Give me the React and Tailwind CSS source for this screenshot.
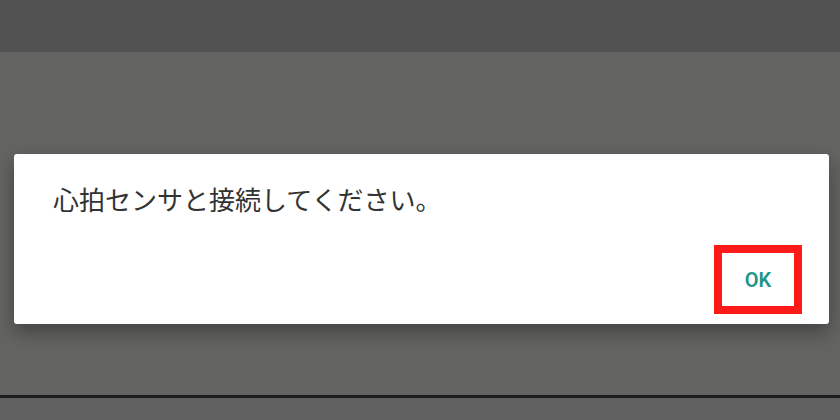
export default function App() {
  return (
    <div
      className="w-[840px] h-[420px] flex flex-col bg-[#646462] overflow-hidden"
      style={{ fontFamily: '"Noto Sans CJK JP", "Noto Sans", sans-serif' }}
    >
      <div className="h-[52px] bg-[#525252] shrink-0" />
      <div className="flex-1 flex flex-col">
        <div className="pt-[102px] px-[11px] pr-[11px]">
          <div className="ml-[3px] mr-0 w-[815px] h-[170px] bg-white rounded-[3px] shadow-[0_8px_20px_rgba(0,0,0,0.35)] flex flex-col">
            <p className="pl-[39px] pt-[27px] text-[26px] leading-[36px] text-[#333333]">
              心拍センサと接続してください。
            </p>
            <div className="flex justify-end pr-[27px] mt-auto mb-[10px]">
              <button
                className="w-[88px] h-[69px] border-[8px] border-[#ff1a1a] flex items-center justify-center text-[20px] font-semibold text-[#1e9688]"
                style={{ fontFamily: 'Roboto, "Noto Sans", sans-serif' }}
              >
                OK
              </button>
            </div>
          </div>
        </div>
        <div className="mt-[71px] h-[3px] bg-[#1e1e1e]" />
        <div className="flex-1 bg-[#616161]" />
      </div>
    </div>
  );
}
